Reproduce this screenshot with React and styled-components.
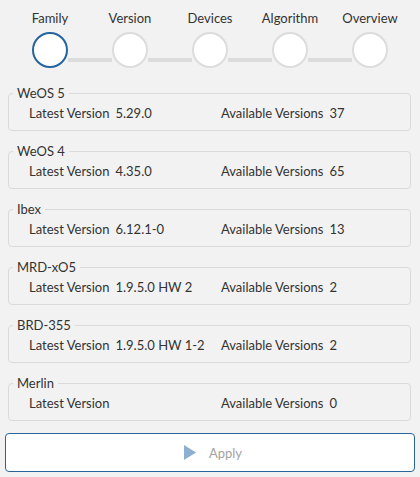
import React from 'react';
import styled, { createGlobalStyle } from 'styled-components';

const GlobalStyle = createGlobalStyle`
  html, body {
    margin: 0;
    background: #f2f2f2;
    font-family: Lato, "Open Sans", sans-serif;
    color: #333;
  }
`;

const Page = styled.div`
  width: 420px;
  height: 477px;
  box-sizing: border-box;
  padding: 10px 5px 5px;
  display: flex;
  flex-direction: column;
`;

const Stepper = styled.div`
  display: grid;
  grid-template-columns: repeat(5, 80px);
  padding: 0 5px;
  margin-bottom: 17px;
`;

const Step = styled.div`
  position: relative;
  display: flex;
  flex-direction: column;
  align-items: center;
  gap: 6px;

  /* connector to the next step */
  &:not(:last-child)::after {
    content: '';
    position: absolute;
    top: 48px;
    left: 58px;
    width: 44px;
    height: 4px;
    background: #dcdcdc;
  }
`;

const StepLabel = styled.span`
  font-size: 13px;
  line-height: 16px;
`;

const StepDot = styled.div`
  width: 36px;
  height: 36px;
  box-sizing: border-box;
  border-radius: 50%;
  background: #fff;
  border: 2px solid ${(p) => (p.active ? '#23649f' : '#dcdcdc')};
`;

const List = styled.div`
  display: flex;
  flex-direction: column;
  gap: 12px;
  margin: 0 4px 0 3px;
`;

const Panel = styled.fieldset`
  margin: 0;
  padding: 2px 20px 7px;
  border: 1px solid #dadada;
  border-radius: 4px;
  min-width: 0;
`;

const Legend = styled.legend`
  font-size: 13px;
  line-height: 16px;
  padding: 0 4px;
  margin-left: -16px;
`;

const Row = styled.div`
  display: grid;
  grid-template-columns: 192px 1fr;
  font-size: 13px;
  line-height: 20px;
  height: 20px;
`;

const Field = styled.span`
  display: flex;
  gap: 6px;
`;

const ApplyButton = styled.button`
  margin-top: 12px;
  height: 40px;
  width: 410px;
  box-sizing: border-box;
  background: #fff;
  border: 1.5px solid #2a64a0;
  border-radius: 4px;
  display: flex;
  align-items: center;
  justify-content: center;
  gap: 13px;
  padding: 0 0 0 6px;
  font-family: inherit;
  font-size: 13px;
  color: #a3a3a3;
`;

const steps = ['Family', 'Version', 'Devices', 'Algorithm', 'Overview'];

const families = [
  { name: 'WeOS 5', latest: '5.29.0', count: 37 },
  { name: 'WeOS 4', latest: '4.35.0', count: 65 },
  { name: 'Ibex', latest: '6.12.1-0', count: 13 },
  { name: 'MRD-xO5', latest: '1.9.5.0 HW 2', count: 2 },
  { name: 'BRD-355', latest: '1.9.5.0 HW 1-2', count: 2 },
  { name: 'Merlin', latest: '', count: 0 },
];

export default function App() {
  return (
    <Page>
      <GlobalStyle />
      <Stepper>
        {steps.map((s, i) => (
          <Step key={s}>
            <StepLabel>{s}</StepLabel>
            <StepDot active={i === 0} />
          </Step>
        ))}
      </Stepper>
      <List>
        {families.map((f) => (
          <Panel key={f.name}>
            <Legend>{f.name}</Legend>
            <Row>
              <Field>
                <span>Latest Version</span>
                <span>{f.latest}</span>
              </Field>
              <Field>
                <span>Available Versions</span>
                <span>{f.count}</span>
              </Field>
            </Row>
          </Panel>
        ))}
      </List>
      <ApplyButton>
        <svg width="12" height="15" viewBox="0 0 12 15">
          <path d="M0 0 L12 7.5 L0 15 Z" fill="#8eb0d0" />
        </svg>
        Apply
      </ApplyButton>
    </Page>
  );
}
